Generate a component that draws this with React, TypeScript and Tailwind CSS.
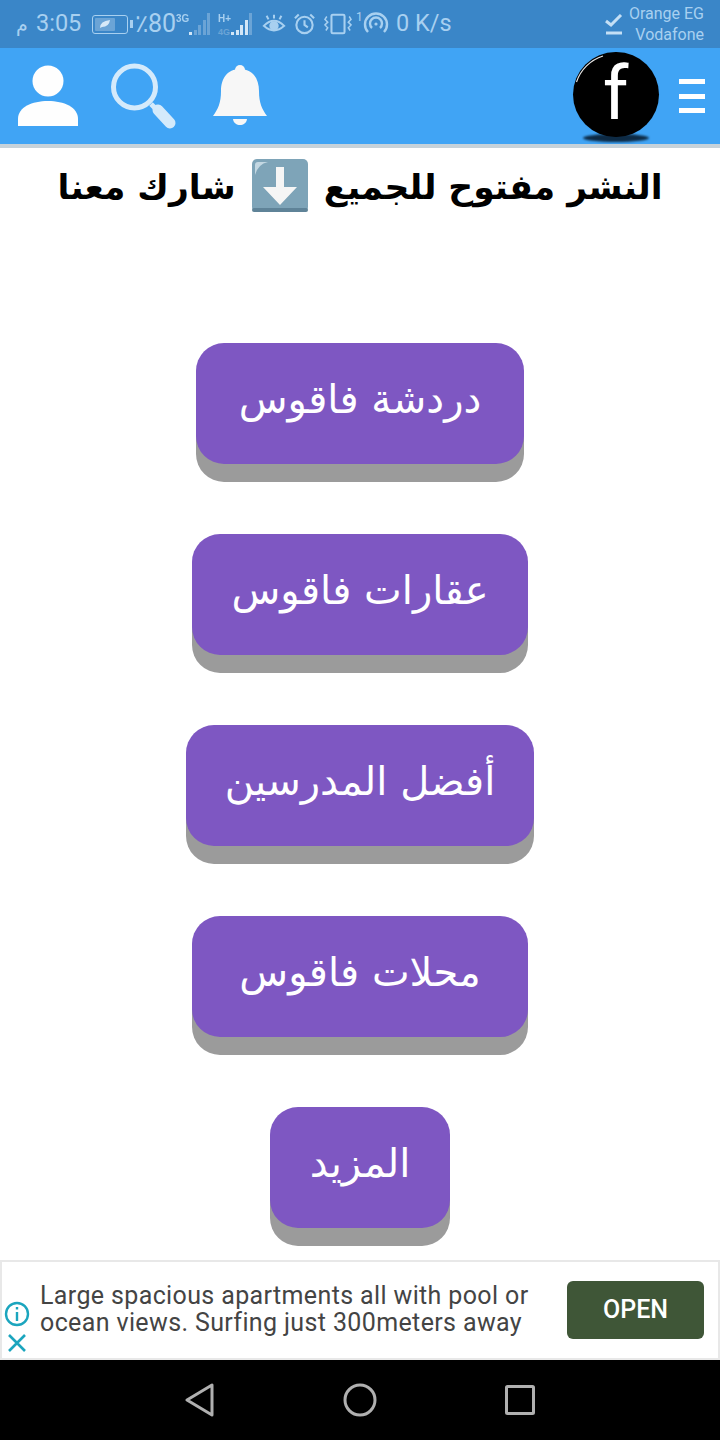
import React from "react";

const sb = "#a8d0f0";

function Signal({ levels, label, plus }: { levels: number; label: string; plus?: boolean }) {
  const hs = [5, 10, 15, 22];
  return (
    <div className="relative w-[36px] h-[24px]">
      <span className="absolute left-0 top-[1px] text-[11px] leading-[10px] font-bold text-[#a8d0f0] [font-family:'Liberation_Sans',sans-serif] scale-x-90 origin-left">{label}</span>
      {plus && <span className="absolute left-0 top-[16px] text-[9px] leading-[8px] font-bold text-[#6ba4d6] [font-family:'Liberation_Sans',sans-serif]">4G</span>}
      <div className="absolute left-[13px] bottom-[1px] flex items-end gap-[1.5px]">
        <div className="w-[3px] h-[3px] bg-[#d2e6f7]" />
        {hs.map((h, i) => (
          <div key={i} className={i < levels ? "w-[3px] bg-[#d2e6f7]" : "w-[3px] bg-[#6ba4d6]"} style={{ height: h }} />
        ))}
      </div>
    </div>
  );
}

function DownEmoji() {
  return (
    <svg width="56" height="53" viewBox="0 0 56 53" className="inline-block mx-[16px] shrink-0">
      <rect x="0" y="0" width="56" height="53" rx="5" fill="#7ea4b8" />
      <rect x="0" y="49" width="56" height="4" rx="2" fill="#5f8398" />
      <path d="M3 16 V6 Q3 3 6 3 H16 Q6 5 3 16Z" fill="#c3d7e2" />
      <path d="M24 8 H32 V28 H45 L28 46 L11 28 H24 Z" fill="#f5f5f5" />
    </svg>
  );
}

function MenuButton({ label, w }: { label: string; w: string }) {
  return (
    <button className={`${w} h-[121px] shrink-0 rounded-[28px] bg-[#7e57c2] shadow-[0_18px_0_#9b9b9b] text-white text-[40px] pb-[10px] font-normal [font-family:'DejaVu_Sans',sans-serif]`}>
      {label}
    </button>
  );
}

export default function App() {
  return (
    <div dir="ltr" className="w-[720px] h-[1440px] flex flex-col bg-white overflow-hidden [font-family:Roboto,sans-serif]">
      {/* status bar */}
      <div className="h-[48px] bg-[#3a86c8] flex items-center pl-[16px] pr-[16px] text-[#a8d0f0] shrink-0">
        <span className="text-[19px] w-[20px] [font-family:'DejaVu_Sans',sans-serif]">م</span>
        <span className="text-[23.5px] w-[56px]">3:05</span>
        <div className="relative w-[36px] h-[19px] border-[1.5px] border-[#a8d0f0] rounded-[3px] p-[2px]">
          <div className="w-[20px] h-full bg-[#6ba4d6] rounded-[1px] flex items-center justify-center">
            <svg width="12" height="10" viewBox="0 0 12 10"><path d="M1 9 Q1 2 11 1 Q10 8 3 8 Z" fill="#d7e9f8" /></svg>
          </div>
        </div>
        <div className="w-[3px] h-[8px] bg-[#a8d0f0] ml-[2px]" />
        <span className="text-[25px] ml-[2px] w-[41px] tracking-[-1px] whitespace-nowrap">٪80</span>
        <Signal levels={0} label="3G" />
        <div className="w-[6px]" />
        <Signal levels={3} label="H+" plus />
        <svg width="24" height="24" viewBox="0 0 26 24" className="ml-[8px]" fill="none" stroke={sb} strokeWidth="2.2">
          <path d="M2 14 Q13 3 24 14 Q13 24 2 14Z" />
          <circle cx="13" cy="14" r="4" fill={sb} />
          <path d="M13 2 V6 M5 3 L7 7 M21 3 L19 7" />
        </svg>
        <svg width="23" height="24" viewBox="0 0 24 24" className="ml-[7px]" fill="none" stroke={sb} strokeWidth="2.2">
          <circle cx="12" cy="13" r="8.5" />
          <path d="M12 8 V13 L15.5 15.5 M2 6 L6 2 M22 6 L18 2" />
        </svg>
        <svg width="28" height="24" viewBox="0 0 30 24" className="ml-[8px]" fill="none" stroke={sb} strokeWidth="2.2">
          <rect x="8" y="2" width="14" height="20" rx="1.5" />
          <path d="M3 4 L1 7 L4 10 L1 13 L4 16 L2 19 M27 4 L29 7 L26 10 L29 13 L26 16 L28 19" strokeWidth="1.6" />
        </svg>
        <span className="text-[12px] leading-[12px] w-[11px] pl-[4px] -mt-[14px]">1</span>
        <svg width="26" height="24" viewBox="0 0 26 24" fill="none" stroke={sb} strokeWidth="2.4">
          <path d="M5 20 A11 11 0 1 1 21 20" />
          <path d="M9 16 A6 6 0 1 1 17 16" />
          <circle cx="13" cy="12" r="1.6" fill={sb} stroke="none" />
        </svg>
        <span className="text-[23.5px] ml-[7px] whitespace-nowrap">0 K/s</span>
        <div className="ml-auto flex items-center">
          <svg width="18" height="22" viewBox="0 0 18 22" className="mr-[6px] mt-[2px]" fill="none" stroke="#c4dff5" strokeWidth="3">
            <path d="M1 7 L6 11 L16 1" />
            <path d="M1 19 H17" />
          </svg>
          <div className="flex flex-col items-end text-[16px] leading-[21px] text-[#a8d0f0]">
            <span>Orange EG</span>
            <span>Vodafone</span>
          </div>
        </div>
      </div>

      {/* app header */}
      <div className="h-[96px] bg-[#40a4f5] flex items-center shrink-0 pl-[18px] pr-[15px]">
        <svg width="60" height="62" viewBox="0 0 60 62" fill="#fefefe">
          <circle cx="30" cy="16" r="15.5" />
          <path d="M0 61 V54 C0 42 14 36 30 36 C46 36 60 42 60 54 V61 Z" />
        </svg>
        <svg width="68" height="68" viewBox="0 0 68 68" fill="none" className="ml-[32px] mt-[1px]">
          <circle cx="24.5" cy="24" r="21" stroke="#d4eafb" strokeWidth="5" />
          <path d="M41 41 L47 47" stroke="#d4eafb" strokeWidth="5" />
          <path d="M48 47 L60 60" stroke="#d4eafb" strokeWidth="11" strokeLinecap="round" />
        </svg>
        <svg width="54" height="62" viewBox="0 0 54 62" fill="#f7f7f7" className="ml-[35px]">
          <circle cx="27" cy="5" r="5" />
          <path d="M27 4 C14 4 8 14 8 26 C8 38 5 44 0 51 H54 C49 44 46 38 46 26 C46 14 40 4 27 4Z" />
          <path d="M20 54 H34 C33 62 21 62 20 54Z" />
        </svg>
        <div className="ml-auto relative w-[86px] h-[90px] mr-[20px] mt-[1px]">
          <div className="absolute left-[10px] bottom-0 w-[66px] h-[8px] rounded-[50%] bg-[#0d2a44] blur-[1px]" />
          <div className="absolute left-0 top-0 w-[86px] h-[85px] rounded-full bg-black flex items-center justify-center">
            <span className="text-white text-[74px] leading-[74px] font-normal -ml-[1px] [font-family:Roboto,sans-serif]">f</span>
          </div>
          <svg width="86" height="85" viewBox="0 0 86 85" fill="none" className="absolute left-0 top-0">
            <path d="M3.5 30 A41 40.5 0 0 1 30 4" stroke="#e5e5e5" strokeWidth="1.2" />
          </svg>
        </div>
        <div className="w-[26px] flex flex-col gap-[9.5px]">
          <div className="h-[5px] bg-white" />
          <div className="h-[5px] bg-white" />
          <div className="h-[5px] bg-white" />
        </div>
      </div>
      <div className="h-[4px] bg-[#c6d2da] shrink-0" />

      {/* title */}
      <div dir="rtl" className="h-[75px] flex items-center justify-center text-black font-bold text-[34.5px] whitespace-nowrap shrink-0 [font-family:'DejaVu_Sans',sans-serif]">
        <span className="pt-[4px]">النشر مفتوح للجميع</span>
        <DownEmoji />
        <span className="pt-[4px]">شارك معنا</span>
      </div>

      {/* buttons */}
      <div className="flex flex-col items-center gap-[70px] pt-[120px] h-[1037px] shrink-0">
        <MenuButton label="دردشة فاقوس" w="w-[328px]" />
        <MenuButton label="عقارات فاقوس" w="w-[336px]" />
        <MenuButton label="أفضل المدرسين" w="w-[348px]" />
        <MenuButton label="محلات فاقوس" w="w-[336px]" />
        <MenuButton label="المزيد" w="w-[180px]" />
      </div>

      {/* ad */}
      <div className="h-[100px] shrink-0 border-2 border-[#e8e8e8] flex items-center bg-white">
        <div className="w-[30px] mr-[8px] self-end flex flex-col items-center pb-[5px]">
          <svg width="26" height="26" viewBox="0 0 26 26" fill="none" stroke="#1ba5be" strokeWidth="2.4">
            <circle cx="13" cy="13" r="11" />
            <path d="M13 11 V20 M13 6 V8.5" />
          </svg>
          <svg width="20" height="20" viewBox="0 0 20 20" fill="none" stroke="#1ba5be" strokeWidth="2.6" className="mt-[6px]">
            <path d="M2 2 L18 18 M18 2 L2 18" />
          </svg>
        </div>
        <div className="text-[25px] leading-[27px] tracking-[0.37px] text-[#444] whitespace-nowrap [font-family:Roboto,sans-serif] -mt-[2px]">
          <div>Large spacious apartments all with pool or</div>
          <div>ocean views. Surfing just 300meters away</div>
        </div>
        <div className="ml-auto mr-[14px] w-[137px] h-[58px] rounded-[6px] bg-[#3f5637] text-white text-[25px] font-medium flex items-center justify-center [font-family:Roboto,sans-serif]">
          OPEN
        </div>
      </div>

      {/* nav */}
      <div className="h-[80px] bg-black flex items-center justify-center gap-[128px] shrink-0">
        <svg width="30" height="34" viewBox="0 0 30 34" fill="none" stroke="#b0b0b0" strokeWidth="3" strokeLinejoin="round">
          <path d="M27 2 V32 L2 17 Z" />
        </svg>
        <svg width="34" height="34" viewBox="0 0 34 34" fill="none" stroke="#b0b0b0" strokeWidth="3">
          <circle cx="17" cy="17" r="15" />
        </svg>
        <svg width="30" height="30" viewBox="0 0 30 30" fill="none" stroke="#b0b0b0" strokeWidth="3" strokeLinejoin="round">
          <rect x="1.5" y="1.5" width="27" height="27" rx="1" />
        </svg>
      </div>
    </div>
  );
}
